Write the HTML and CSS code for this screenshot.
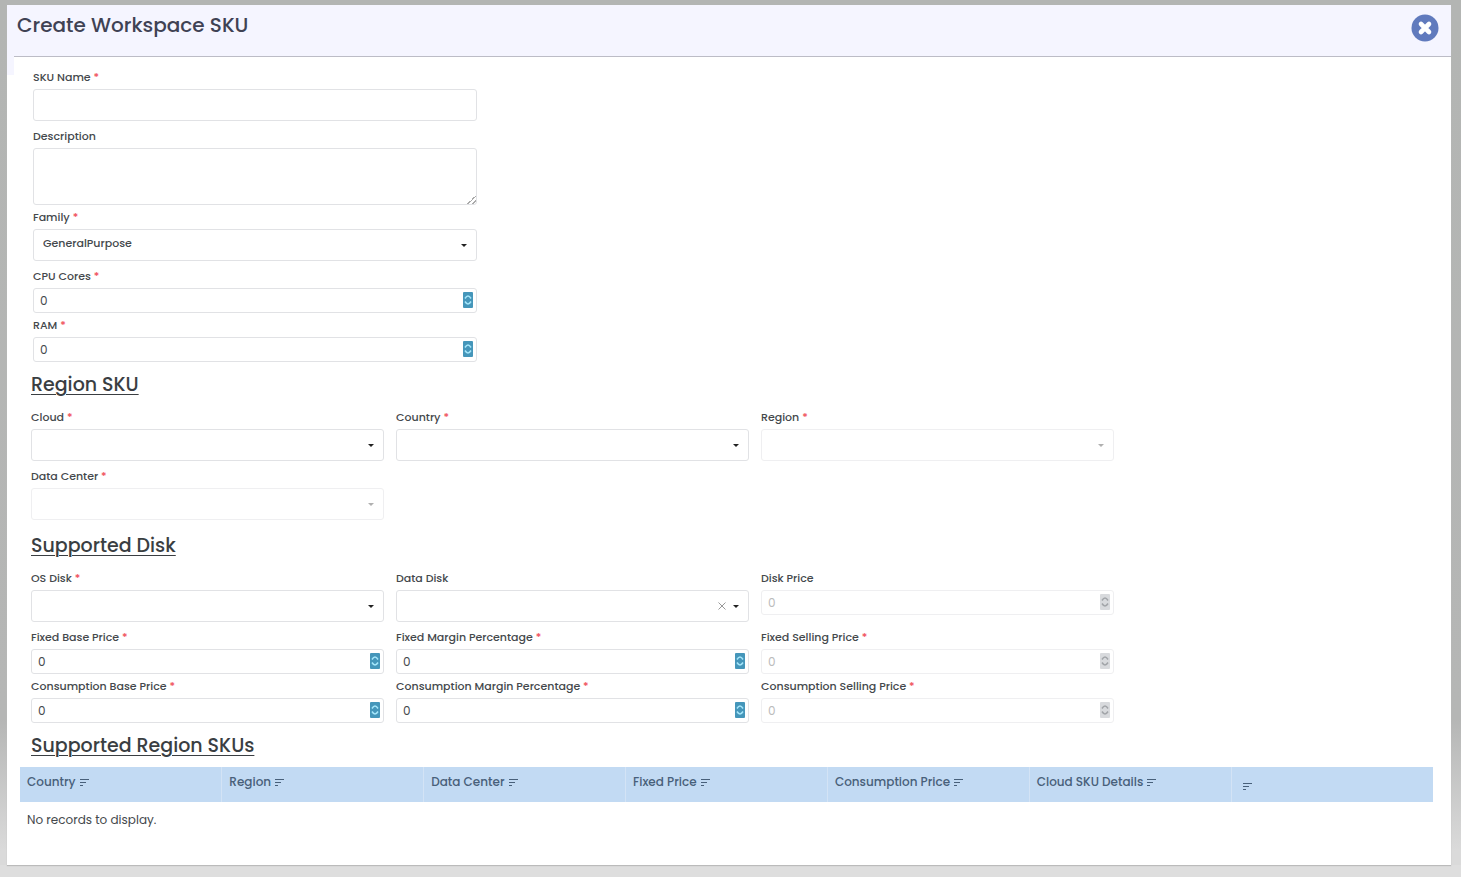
FILE: index.html
```html
<!DOCTYPE html>
<html lang="en">
<head>
<meta charset="utf-8">
<title>Create Workspace SKU</title>
<link rel="stylesheet" href="styles.css">
</head>
<body>
<svg class="defs" aria-hidden="true">
  <symbol id="caret" viewBox="0 0 8 8"><path d="M1 3h6L4 6z" fill="currentColor"/></symbol>
  <symbol id="spin" viewBox="0 0 10 16"><path d="M2 6.500Q5 1.500 8 6.500M2 9.500Q5 14.500 8 9.500" fill="none" stroke="currentColor" stroke-width="1.5"/></symbol>
  <symbol id="sort" viewBox="0 0 10 10"><path d="M1 2.500h9M1 5.500h6M1 8.500h3" fill="none" stroke="currentColor"/></symbol>
  <symbol id="clear" viewBox="0 0 10 10"><path d="M1.5 1.5l7 7M8.5 1.5l-7 7" fill="none" stroke="currentColor"/></symbol>
</svg>
<main class="dialog">
  <header class="head">
    <h1>Create Workspace SKU</h1>
    <button class="close" type="button" aria-label="Close">
      <svg viewBox="0 0 28 28"><circle cx="14" cy="14" r="13.5" fill="#607abd"/><path d="M10 10l8 8M18 10l-8 8" stroke="#fff" stroke-width="4.600" stroke-linecap="round"/></svg>
    </button>
  </header>
  <form class="body">
    <div class="basic">
      <div class="field"><label for="name">SKU Name <i>*</i></label><input class="control" id="name" type="text"></div>
      <div class="field area"><label for="desc">Description</label><textarea class="control" id="desc"></textarea></div>
      <div class="field"><label for="family">Family <i>*</i></label><div class="box"><select class="control" id="family"><option>GeneralPurpose</option></select><svg class="caret"><use href="#caret"/></svg></div></div>
      <div class="field num"><label for="cpu">CPU Cores <i>*</i></label><div class="box"><input class="control" id="cpu" type="number" value="0"><button class="spin" type="button" aria-label="Step CPU cores"><svg><use href="#spin"/></svg></button></div></div>
      <div class="field num"><label for="ram">RAM <i>*</i></label><div class="box"><input class="control" id="ram" type="number" value="0"><button class="spin" type="button" aria-label="Step RAM"><svg><use href="#spin"/></svg></button></div></div>
    </div>

    <h2>Region SKU</h2>
    <div class="grid">
      <div class="field"><label for="cloud">Cloud <i>*</i></label><div class="box"><select class="control" id="cloud"><option></option></select><svg class="caret"><use href="#caret"/></svg></div></div>
      <div class="field"><label for="country">Country <i>*</i></label><div class="box"><select class="control" id="country"><option></option></select><svg class="caret"><use href="#caret"/></svg></div></div>
      <div class="field"><label for="region">Region <i>*</i></label><div class="box off"><select class="control" id="region" disabled><option></option></select><svg class="caret"><use href="#caret"/></svg></div></div>
      <div class="field"><label for="dc">Data Center <i>*</i></label><div class="box off"><select class="control" id="dc" disabled><option></option></select><svg class="caret"><use href="#caret"/></svg></div></div>
    </div>

    <h2>Supported Disk</h2>
    <div class="grid">
      <div class="field"><label for="os">OS Disk <i>*</i></label><div class="box"><select class="control" id="os"><option></option></select><svg class="caret"><use href="#caret"/></svg></div></div>
      <div class="field"><label for="data">Data Disk</label><div class="box"><select class="control" id="data"><option></option></select><button class="clear" type="button" aria-label="Clear data disk"><svg><use href="#clear"/></svg></button><svg class="caret"><use href="#caret"/></svg></div></div>
      <div class="field num"><label for="dp">Disk Price</label><div class="box off"><input class="control" id="dp" type="number" value="0" disabled><button class="spin" type="button" aria-label="Step disk price" disabled><svg><use href="#spin"/></svg></button></div></div>
      <div class="field num"><label for="fb">Fixed Base Price <i>*</i></label><div class="box"><input class="control" id="fb" type="number" value="0"><button class="spin" type="button" aria-label="Step fixed base price"><svg><use href="#spin"/></svg></button></div></div>
      <div class="field num"><label for="fm">Fixed Margin Percentage <i>*</i></label><div class="box"><input class="control" id="fm" type="number" value="0"><button class="spin" type="button" aria-label="Step fixed margin"><svg><use href="#spin"/></svg></button></div></div>
      <div class="field num"><label for="fs">Fixed Selling Price <i>*</i></label><div class="box off"><input class="control" id="fs" type="number" value="0" disabled><button class="spin" type="button" aria-label="Step fixed selling price" disabled><svg><use href="#spin"/></svg></button></div></div>
      <div class="field num"><label for="cb">Consumption Base Price <i>*</i></label><div class="box"><input class="control" id="cb" type="number" value="0"><button class="spin" type="button" aria-label="Step consumption base price"><svg><use href="#spin"/></svg></button></div></div>
      <div class="field num"><label for="cm">Consumption Margin Percentage <i>*</i></label><div class="box"><input class="control" id="cm" type="number" value="0"><button class="spin" type="button" aria-label="Step consumption margin"><svg><use href="#spin"/></svg></button></div></div>
      <div class="field num"><label for="cs">Consumption Selling Price <i>*</i></label><div class="box off"><input class="control" id="cs" type="number" value="0" disabled><button class="spin" type="button" aria-label="Step consumption selling price" disabled><svg><use href="#spin"/></svg></button></div></div>
    </div>

    <h2 class="table-title">Supported Region SKUs</h2>
    <table>
      <thead><tr>
        <th>Country <svg><use href="#sort"/></svg></th>
        <th>Region <svg><use href="#sort"/></svg></th>
        <th>Data Center <svg><use href="#sort"/></svg></th>
        <th>Fixed Price <svg><use href="#sort"/></svg></th>
        <th>Consumption Price <svg><use href="#sort"/></svg></th>
        <th>Cloud SKU Details <svg><use href="#sort"/></svg></th>
        <th class="blank"><svg><use href="#sort"/></svg></th>
      </tr></thead>
      <tbody><tr><td colspan="7">No records to display.</td></tr></tbody>
    </table>
  </form>
</main>
</body>
</html>
```
FILE: styles.css
```css
* { box-sizing: border-box; }

body {
  display: flex;
  min-height: 100vh;
  margin: 0;
  padding: 5px 10px 12px 7px;
  background: linear-gradient(#dedede, #dedede) bottom / 100% 12px no-repeat,
    linear-gradient(#b3b5b3 0, #b5b6b5 82%, #dadada 97%);
  font: 500 11px/18px Poppins, Inter, sans-serif;
  color: #44484c;
}

.defs { position: absolute; width: 0; height: 0; }

.dialog {
  flex: 1;
  min-width: 0;
  background: linear-gradient(#f5f5ff, #f5f5ff) 0 0 / 7px 70px no-repeat, #fff;
  box-shadow: 0 1px 1px #bbb;
}

.head {
  display: flex;
  justify-content: space-between;
  align-items: flex-start;
  height: 52px;
  padding: 5px 12px 0 10px;
  background: linear-gradient(#bcbcc6, #bcbcc6) 7px 100% / 100% 1px no-repeat, #f5f5ff;
}

h1 { margin: 0; font-size: 20px; font-weight: 500; line-height: 30px; color: #3f4254; }

.close { width: 28px; height: 28px; margin-top: 4px; padding: 0; border: 0; background: none; }
.close svg { display: block; width: 28px; height: 28px; }

.body { padding: 11px 18px 0 13px; }

.basic { width: calc(33% - 22px); margin-left: 13px; }

.grid {
  display: grid;
  grid-template-columns: repeat(3, minmax(0, 1fr));
  column-gap: 12px;
  width: calc(77% - 5px);
  margin-left: 11px;
}

.field { padding-bottom: 6px; }
.area, .num { padding-bottom: 3px; }

label { display: block; margin-bottom: 3px; }
label i { font-style: normal; color: #f0515c; }

.box { position: relative; }

.control {
  display: block;
  width: 100%;
  height: 32px;
  padding: 0 9px;
  border: 1px solid #e1e2e5;
  border-radius: 3px;
  background: #fff;
  font: inherit;
  color: inherit;
  appearance: none;
}

select.control { padding: 0 9px 4px; }
textarea.control { height: 57px; resize: vertical; }
.control::-webkit-resizer { background: linear-gradient(135deg, transparent 50%, #aaa 50% 60%, transparent 60% 75%, #aaa 75% 85%, transparent 85%) 100% 100% / 9px 9px no-repeat; }
.num .control { height: 25px; padding: 0 6px; font-size: 12px; font-weight: 400; appearance: textfield; }
.control::-webkit-inner-spin-button { appearance: none; margin: 0; }
.control:disabled { border-color: #efeff1; color: #bbb; opacity: 1; }

.caret { position: absolute; top: 12px; right: 9px; width: 8px; height: 8px; color: #222; pointer-events: none; }
.off .caret { color: #b0b0b0; }

.spin {
  position: absolute;
  top: 4px;
  right: 4px;
  width: 10px;
  height: 16px;
  padding: 0;
  border: 0;
  border-radius: 1px;
  background: #4596ba;
  color: #a5e6fa;
}
.spin:disabled { background: #d8dadd; color: #a2a5a9; }
.spin svg { display: block; width: 10px; height: 16px; }

.clear { position: absolute; top: 11px; right: 22px; width: 10px; height: 10px; padding: 0; border: 0; background: none; color: #999; }
.clear svg { display: block; width: 10px; height: 10px; }

h2 {
  margin: 5px 0 8px 11px;
  font-size: 19px;
  font-weight: 500;
  line-height: 30px;
  color: #3a3e42;
  text-decoration: underline;
  text-decoration-thickness: 1px;
  text-underline-offset: 3px;
}
.table-title { margin-bottom: 6px; }

table { width: 100%; border-collapse: collapse; table-layout: fixed; font-size: 12px; }
th {
  height: 35px;
  padding: 0 7px 6px;
  border-left: 1px solid #d3e3f5;
  background: #c2daf3;
  font-weight: 500;
  text-align: left;
  color: #48607a;
}
th:first-child { border-left: 0; }
th svg { width: 10px; height: 10px; vertical-align: -1px; }
th.blank { padding: 3px 10px 0; }
td { height: 36px; padding: 0 7px; font-weight: 400; }
```
